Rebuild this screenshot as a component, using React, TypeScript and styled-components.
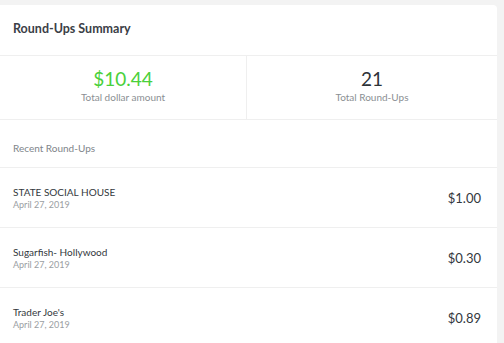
import React from 'react';
import styled, {createGlobalStyle} from 'styled-components';

const GlobalStyle = createGlobalStyle`
  body {
    margin: 0;
    background: #f3f3f3;
    font-family: Lato, "Open Sans", sans-serif;
  }
`

const Page = styled.div`
  padding: 5px 7px 0 0;
  height: 343px;
  box-sizing: border-box;
  overflow: hidden;
`

const Card = styled.div`
  background: #fff;
  border-radius: 0 4px 0 0;
`

const Header = styled.div`
  height: 51px;
  box-sizing: border-box;
  display: flex;
  align-items: center;
  padding: 0 0 4px 13px;
  border-bottom: 1px solid #efefef;
  font-size: 12.5px;
  font-weight: 700;
  color: #3b4046;
`

const Stats = styled.div`
  display: grid;
  grid-template-columns: 246px 1fr;
  height: 63px;
  border-bottom: 1px solid #efefef;
`

const Stat = styled.div`
  display: flex;
  flex-direction: column;
  align-items: center;
  justify-content: center;
  padding-bottom: 4px;
  & + & {
    border-left: 1px solid #efefef;
  }
`

const StatValue = styled.div<{green?: boolean}>`
  font-size: 19px;
  line-height: 22px;
  color: ${props => props.green ? '#4ad03a' : '#2e3338'};
`

const StatLabel = styled.div`
  font-size: 10px;
  line-height: 14px;
  color: #8b8f93;
`

const SectionTitle = styled.div`
  height: 48px;
  box-sizing: border-box;
  display: flex;
  align-items: center;
  padding: 8px 0 0 13px;
  font-size: 10px;
  color: #80858a;
  border-bottom: 1px solid #efefef;
`

const Row = styled.div`
  height: 59px;
  display: flex;
  align-items: center;
  justify-content: space-between;
  padding: 0 16px 0 13px;
  border-bottom: 1px solid #efefef;
`

const Info = styled.div`
  display: flex;
  flex-direction: column;
  gap: 1px;
`

const Name = styled.div`
  font-size: 10px;
  color: #33383d;
`

const DateText = styled.div`
  font-size: 9px;
  color: #9a9ea2;
`

const Amount = styled.div`
  font-size: 13px;
  color: #33383d;
`

const roundUps = [
  {name: 'STATE SOCIAL HOUSE', date: 'April 27, 2019', amount: '$1.00'},
  {name: 'Sugarfish- Hollywood', date: 'April 27, 2019', amount: '$0.30'},
  {name: "Trader Joe's", date: 'April 27, 2019', amount: '$0.89'},
]

function App() {
  return (
    <Page>
      <GlobalStyle />
      <Card>
        <Header>Round-Ups Summary</Header>
        <Stats>
          <Stat>
            <StatValue green>$10.44</StatValue>
            <StatLabel>Total dollar amount</StatLabel>
          </Stat>
          <Stat>
            <StatValue>21</StatValue>
            <StatLabel>Total Round-Ups</StatLabel>
          </Stat>
        </Stats>
        <SectionTitle>Recent Round-Ups</SectionTitle>
        {roundUps.map(item =>
          <Row key={item.name}>
            <Info>
              <Name>{item.name}</Name>
              <DateText>{item.date}</DateText>
            </Info>
            <Amount>{item.amount}</Amount>
          </Row>
        )}
      </Card>
    </Page>
  )
}

export default App
